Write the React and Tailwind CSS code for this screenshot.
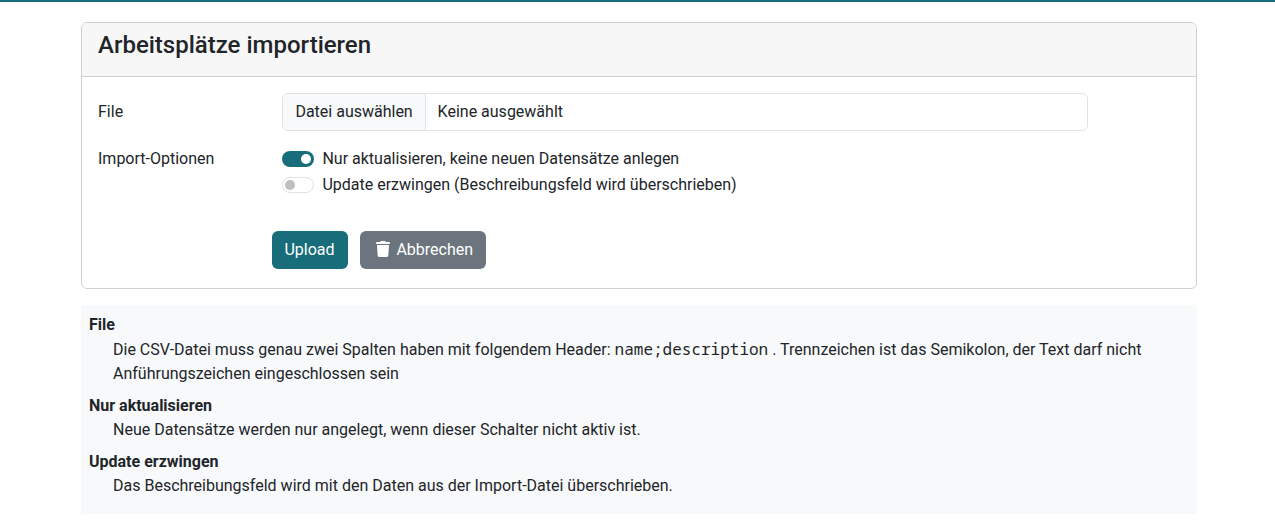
function Switch({ on, children }) {
  return (
    <label className="flex h-6 items-center">
      <span className={on ? "mr-[8.4px] flex h-4 w-8 items-center justify-end rounded-full bg-[#176d7a] px-[2.75px]" : "mr-[8.4px] flex h-4 w-8 items-center rounded-full border border-[#dee2e6] bg-white px-[1.75px]"}>
        <span className={on ? "size-[10.5px] rounded-full bg-white" : "size-[10.5px] rounded-full bg-[#bfbfbf]"} />
      </span>
      <span>{children}</span>
    </label>
  );
}

function Help({ title, children }) {
  return (
    <>
      <dt className="font-bold">{title}</dt>
      <dd className="mb-2 ml-6">{children}</dd>
    </>
  );
}

export default function App() {
  return (
    <div className="h-[525px] overflow-hidden border-t-2 border-[#176d7a] bg-white font-['Roboto',sans-serif] text-base leading-6 text-[#212529]">
      <main className="ml-[81px] w-[1116px] pt-5">
        <section className="h-[267px] rounded-md border border-[#d0d1d1]">
          <header className="h-[54px] rounded-t-[5px] border-b border-[#d0d1d1] bg-[#f7f7f7] px-4 pt-2">
            <h1 className="text-2xl leading-[28.8px] font-medium">Arbeitsplätze importieren</h1>
          </header>
          <div className="px-4 pt-4">
            <div className="flex">
              <span className="w-[184px] pt-[7px]">File</span>
              <div className="flex h-[38px] w-[806px] overflow-hidden rounded-md border border-[#dee2e6]">
                <span className="w-[143px] border-r border-[#dee2e6] bg-[#f8f9fb] py-1.5 pl-[12.4px]">Datei auswählen</span>
                <span className="py-1.5 pl-[11.6px]">Keine ausgewählt</span>
              </div>
            </div>
            <div className="mt-4 flex">
              <span className="w-[184px]">Import-Optionen</span>
              <div className="flex flex-col gap-0.5">
                <Switch on>Nur aktualisieren, keine neuen Datensätze anlegen</Switch>
                <Switch>Update erzwingen (Beschreibungsfeld wird überschrieben)</Switch>
              </div>
            </div>
            <div className="mt-[34px] ml-[174px] flex gap-3 text-white">
              <button className="h-[38px] w-[76px] rounded-md bg-[#176d7a] pr-px">Upload</button>
              <button className="flex h-[38px] w-[126px] items-center rounded-md bg-[#6c757d] pl-[15.6px]">
                <svg viewBox="0 0 448 512" className="mr-[6.8px] mb-0.5 h-4 w-3.5 shrink-0" fill="currentColor">
                  <path d="M135.2 17.7L128 32H32C14.3 32 0 46.3 0 64S14.3 96 32 96H416c17.7 0 32-14.3 32-32s-14.3-32-32-32H320l-7.2-14.3C307.4 6.8 296.3 0 284.2 0H163.8c-12.1 0-23.2 6.8-28.6 17.7zM416 128H32L53.2 467c1.6 25.3 22.6 45 47.9 45H346.9c25.3 0 46.3-19.7 47.9-45L416 128z" />
                </svg>
                Abbrechen
              </button>
            </div>
          </div>
        </section>
        <dl className="mt-4 h-[209px] bg-[#f8f9fb] p-2">
          <Help title="File">
            Die CSV-Datei muss genau zwei Spalten haben mit folgendem Header: <code className="font-['Noto_Sans_Mono','DejaVu_Sans_Mono',monospace]">name;description</code> . Trennzeichen ist das Semikolon, der Text darf nicht Anführungszeichen eingeschlossen sein
          </Help>
          <Help title="Nur aktualisieren">Neue Datensätze werden nur angelegt, wenn dieser Schalter nicht aktiv ist.</Help>
          <Help title="Update erzwingen">Das Beschreibungsfeld wird mit den Daten aus der Import-Datei überschrieben.</Help>
        </dl>
      </main>
    </div>
  );
}
